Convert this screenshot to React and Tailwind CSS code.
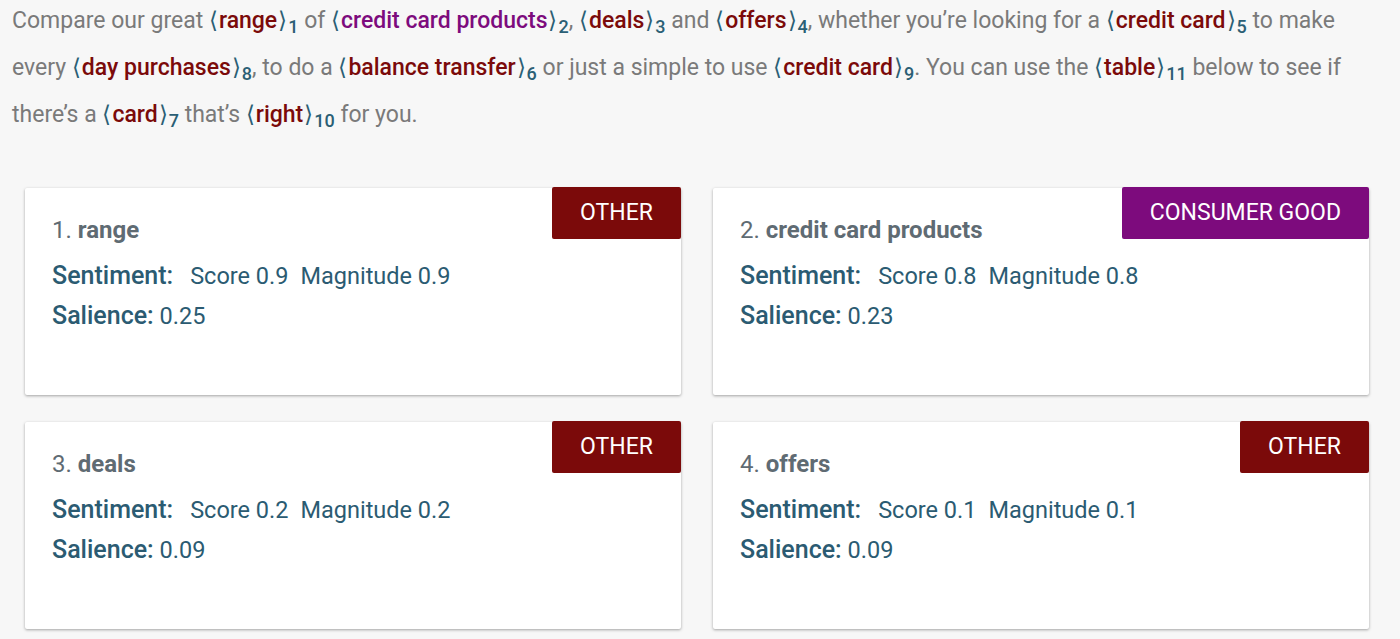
const ENT = {
  red: 'text-[#7b0a0a]',
  purple: 'text-[#7d0b7d]',
};

function Ent({ children, n, tone = 'red' }) {
  return (
    <span className="whitespace-nowrap">
      <span className="text-[#2b5f75] mr-[1px]">⟨</span>
      <span className={`font-medium ${ENT[tone]}`}>{children}</span>
      <span className="text-[#2b5f75] ml-[1px]">⟩</span>
      <sub className="ml-[1px] text-[18px] font-medium text-[#2b5f75] relative top-[5px]">{n}</sub>
    </span>
  );
}

const CARDS = [
  { n: 1, name: 'range', type: 'OTHER', score: '0.9', mag: '0.9', sal: '0.25' },
  { n: 2, name: 'credit card products', type: 'CONSUMER GOOD', score: '0.8', mag: '0.8', sal: '0.23' },
  { n: 3, name: 'deals', type: 'OTHER', score: '0.2', mag: '0.2', sal: '0.09' },
  { n: 4, name: 'offers', type: 'OTHER', score: '0.1', mag: '0.1', sal: '0.09' },
];

function Card({ c }) {
  const badge = c.type === 'OTHER' ? 'bg-[#7b0a0a]' : 'bg-[#7d0b7d]';
  return (
    <div className="relative bg-white h-[207px] rounded-[2px] shadow-[0_1px_3px_rgba(0,0,0,0.35)] px-[27px] pt-[26px]">
      <div className={`absolute right-0 top-[-1px] h-[52px] px-[28px] flex items-center rounded-[2px] text-white text-[23px] ${badge}`}>
        {c.type}
      </div>
      <div className="text-[24px] text-[#5f6b73] leading-[32px]">
        {c.n}. <span className="font-bold">{c.name}</span>
      </div>
      <div className="mt-[14px] text-[23.5px] text-[#2b5b72] leading-[32px]">
        <span className="font-medium text-[25px]">Sentiment:</span>
        <span className="ml-[17px]">Score {c.score}</span>
        <span className="ml-[12px]">Magnitude {c.mag}</span>
      </div>
      <div className="mt-[8px] text-[23.5px] text-[#2b5b72] leading-[32px]">
        <span className="font-medium text-[25px]">Salience:</span> {c.sal}
      </div>
    </div>
  );
}

export default function App() {
  return (
    <div className="min-h-screen bg-[#f7f7f7] font-['Roboto',sans-serif] overflow-hidden">
      <p className="px-[12px] text-[23px] leading-[47px] text-[#7a7a7a] -mt-[3px]">
        Compare our great <Ent n="1">range</Ent> of <Ent n="2" tone="purple">credit card products</Ent>,{' '}
        <Ent n="3">deals</Ent> and <Ent n="4">offers</Ent>, whether you’re looking for a{' '}
        <Ent n="5">credit card</Ent> to make every <Ent n="8">day purchases</Ent>, to do a{' '}
        <Ent n="6">balance transfer</Ent> or just a simple to use <Ent n="9">credit card</Ent>. You can use the{' '}
        <Ent n="11">table</Ent> below to see if there’s a <Ent n="7">card</Ent> that’s <Ent n="10">right</Ent> for you.
      </p>
      <div className="grid grid-cols-2 gap-x-[32px] gap-y-[27px] pl-[25px] pr-[31px] mt-[50px]">
        {CARDS.map(c => <Card key={c.n} c={c} />)}
      </div>
    </div>
  );
}
